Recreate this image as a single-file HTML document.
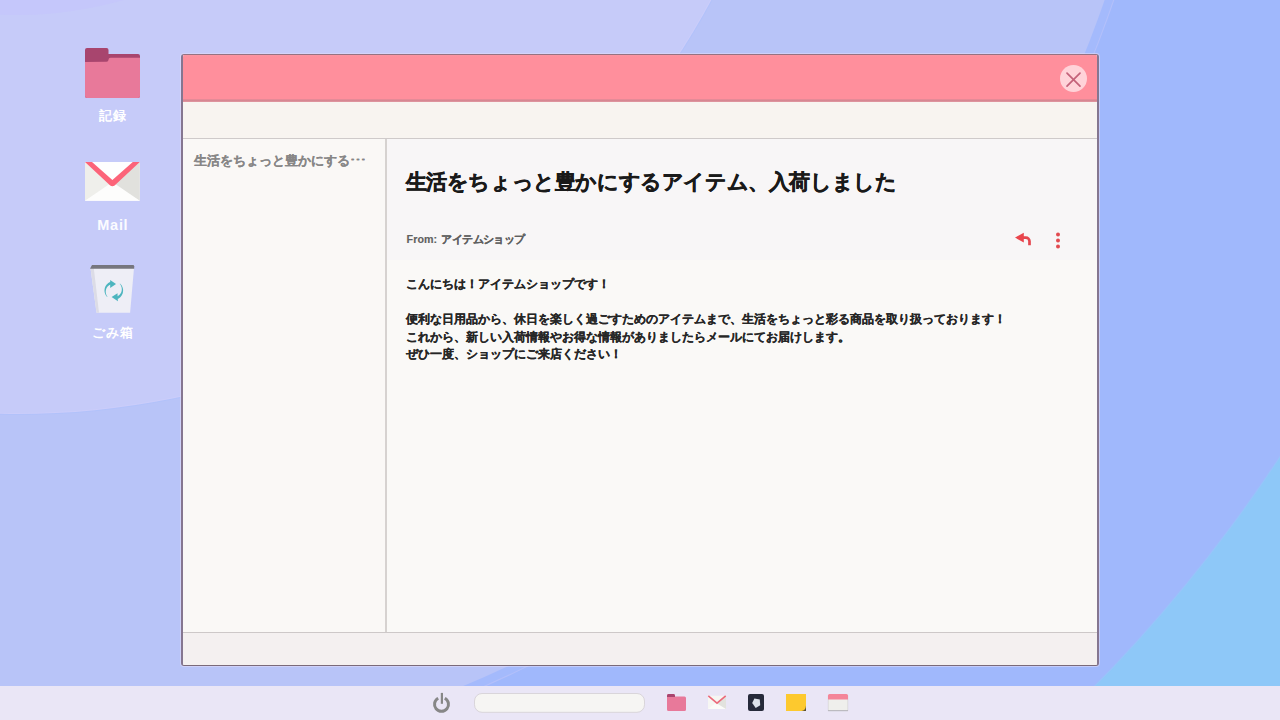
<!DOCTYPE html>
<html lang="ja">
<head>
<meta charset="utf-8">
<style>
*{margin:0;padding:0;box-sizing:border-box}
html,body{width:1280px;height:720px;overflow:hidden}
body{position:relative;font-family:"Liberation Sans",sans-serif;background:#8ec8f8}
.abs{position:absolute}
.bg{position:absolute;left:0;top:0;width:1280px;height:720px;overflow:hidden;background:#8ec8f8}
.c{position:absolute;border-radius:50%}
.label{position:absolute;color:#fff;font-weight:bold;font-size:14px;line-height:16px;text-align:center;width:100px;letter-spacing:0.5px;white-space:nowrap}
.win{position:absolute;left:181px;top:54px;width:918px;height:612px;border:2px solid #857690;border-top:1.5px solid #967282;border-bottom:1px solid #7a6a7a;border-radius:3px;box-shadow:0 0 0 1px rgba(225,220,250,0.55);background:#faf8f6;overflow:hidden}
.title{position:absolute;left:0;top:0;width:914px;height:47px;background:linear-gradient(to bottom,#fa96a2 0px,#ff8f9c 2px,#ff8f9c 43.5px,#d88894 45px,#d48590 46px,#e8a0aa 47px)}
.tool{position:absolute;left:0;top:47px;width:914px;height:37px;background:#f8f4f0;border-bottom:1px solid #cfcaca}
.left{position:absolute;left:0;top:84px;width:204px;height:494px;background:#faf8f6;border-right:2px solid #d6d2d0}
.right{position:absolute;left:204px;top:84px;width:710px;height:494px;background:#faf9f7}
.hdr{position:absolute;left:0;top:0;width:710px;height:121px;background:#f8f6f7}
.foot{position:absolute;left:0;top:577px;width:914px;height:34px;background:#f4f0f0;border-top:1px solid #cdc8c8}
.taskbar{position:absolute;left:0;top:686px;width:1280px;height:34px;background:#eae6f6}
.t{position:absolute;white-space:nowrap}
</style>
</head>
<body>
<div class="bg">
  <div class="c" style="left:-1493.9px;top:-1884.9px;width:3022.6px;height:3022.6px;background:#98c4fa"></div>
  <div class="c" style="left:-1493.4px;top:-1884.4px;width:3021.6px;height:3021.6px;background:#a0b8fc;"></div>
  <div class="c" style="left:-1140.8px;top:-1531.8px;width:2316.4px;height:2316.4px;background:#b4c0fa;"></div>
  <div class="c" style="left:-1139.8px;top:-1530.8px;width:2314.4px;height:2314.4px;background:#a4bafc;"></div>
  <div class="c" style="left:-1132.2px;top:-1523.2px;width:2299.2px;height:2299.2px;background:#b8c4f8;"></div>
  <div class="c" style="left:-772.2px;top:-1164.2px;width:1579.2px;height:1579.2px;background:#b2c2fa;"></div>
  <div class="c" style="left:-771.4px;top:-1163.4px;width:1577.6px;height:1577.6px;background:#cbcdfa;"></div>
  <div class="c" style="left:-770.4px;top:-1162.4px;width:1575.6px;height:1575.6px;background:#c6cbf9;"></div>
  <div class="c" style="left:-371.6px;top:-762.6px;width:778.0px;height:778.0px;background:#c5c7fb;"></div>
</div>

<!-- desktop icons -->
<svg class="abs" style="left:80px;top:44px" width="64" height="60" viewBox="80 44 64 60">
  <path d="M85 50 a2 2 0 0 1 2 -2 h19.5 a2 2 0 0 1 2 2 v4 h29.5 a2 2 0 0 1 2 2 v40 a2 2 0 0 1 -2 2 h-51 a2 2 0 0 1 -2 -2z" fill="#a8456e"/>
  <path d="M85 62 V96 a2 2 0 0 0 2 2 h51 a2 2 0 0 0 2 -2 V57.8 H110.5 a2 2 0 0 0 -2 2 a2 2 0 0 1 -2 2z" fill="#e8799a"/>
</svg>
<div class="label" style="left:62.5px;top:107.5px;font-size:13px;letter-spacing:1.5px;text-indent:1.5px">記録</div>

<svg class="abs" style="left:80px;top:156px" width="64" height="50" viewBox="80 156 64 50">
  <rect x="85" y="162" width="54.8" height="38.7" fill="#fefefe"/>
  <path d="M85 162 L112.4 185 L85 200.7z" fill="#efefeb"/>
  <path d="M139.8 162 L112.4 185 L139.8 200.7z" fill="#e1e1dd"/>
  <path d="M85 200.7 L112.4 182 L139.8 200.7z" fill="#fdfdfc"/>
  <path d="M85 162 H92 L112.4 180 L132.8 162 H139.8 L114.6 185.4 Q112.4 187 110.2 185.4z" fill="#fc6479"/>
</svg>
<div class="label" style="left:62.5px;top:217px;letter-spacing:0.7px;text-indent:0.7px;font-size:14.5px;color:#fbfbff">Mail</div>

<svg class="abs" style="left:84px;top:260px" width="56" height="58" viewBox="84 260 56 58">
  <path d="M90.5 268 L134 268 L130.1 312.8 L96.5 312.8z" fill="#eeeef6"/>
  <path d="M90.5 268 L93.8 268 L99 312.8 L96.5 312.8z" fill="#dcdce6"/>
  <path d="M90 268.8 L92 265 H133 a1.2 1.2 0 0 1 1.2 1.2 V268.8z" fill="#76767e"/>
  <path d="M107.22 297.08 L106.69 296.49 L106.21 295.87 L105.78 295.20 L105.41 294.50 L105.10 293.78 L104.85 293.02 L104.67 292.25 L104.55 291.47 L104.50 290.68 L104.52 289.89 L104.61 289.11 L104.76 288.33 L104.97 287.57 L105.26 286.83 L105.60 286.12 L106.00 285.43 L106.46 284.79 L106.97 284.19 L107.53 283.63 L108.14 283.12 L108.79 282.67 L109.47 282.27 L110.18 281.93 L110.93 281.66 L111.79 284.32 L111.23 284.42 L110.68 284.57 L110.13 284.77 L109.60 285.03 L109.08 285.33 L108.59 285.68 L108.12 286.08 L107.68 286.52 L107.27 287.01 L106.91 287.54 L106.59 288.10 L106.31 288.70 L106.09 289.33 L105.92 289.98 L105.80 290.66 L105.74 291.35 L105.75 292.05 L105.81 292.75 L105.94 293.46 L106.13 294.16 L106.38 294.85 L106.70 295.52 L107.07 296.17 L107.51 296.79z" fill="#4db5bf"/>
  <path d="M120.02 283.59 L120.58 284.14 L121.10 284.73 L121.56 285.37 L121.96 286.04 L122.31 286.74 L122.59 287.47 L122.82 288.22 L122.98 288.99 L123.07 289.77 L123.10 290.55 L123.06 291.34 L122.96 292.11 L122.79 292.88 L122.56 293.63 L122.26 294.36 L121.91 295.06 L121.49 295.72 L121.03 296.35 L120.51 296.94 L119.94 297.48 L119.33 297.98 L118.68 298.42 L118.00 298.80 L117.28 299.12 L116.23 296.53 L116.78 296.39 L117.32 296.20 L117.84 295.97 L118.36 295.68 L118.85 295.35 L119.32 294.97 L119.76 294.54 L120.16 294.08 L120.53 293.57 L120.86 293.02 L121.15 292.45 L121.38 291.84 L121.57 291.20 L121.70 290.55 L121.78 289.87 L121.79 289.19 L121.75 288.49 L121.65 287.80 L121.48 287.11 L121.26 286.42 L120.97 285.75 L120.62 285.10 L120.22 284.48 L119.76 283.89z" fill="#4db5bf"/>
  <path d="M110.2 280 L116 283.9 L110.2 287.9z" fill="#4db5bf"/>
  <path d="M111.6 297.1 L117.5 293.2 L117.9 301.2z" fill="#4db5bf"/>
</svg>
<div class="label" style="left:62.5px;top:324.5px;font-size:13px;letter-spacing:1px;text-indent:1px">ごみ箱</div>

<div class="win">
  <div class="title"></div>
  <div class="tool"></div>
  <div class="left">
    <div class="t" style="left:11px;top:14px;font-size:13px;line-height:16px;color:#878686;font-weight:bold;-webkit-text-stroke:0.1px #878686">生活をちょっと豊かにする<span style="display:inline-block;transform:scaleX(1.45);margin-left:2px;font-size:11px;-webkit-text-stroke:0.15px #878686;position:relative;top:-1px">⋯</span></div>
  </div>
  <div class="right">
    <div class="hdr"></div>
    <div class="t" style="left:18.5px;top:30px;font-size:21px;letter-spacing:-0.4px;line-height:26px;color:#1a1a1a;font-weight:bold;-webkit-text-stroke:0.45px #1a1a1a">生活をちょっと豊かにするアイテム、入荷しました</div>
    <div class="t" style="left:19.5px;top:93px;font-size:10.7px;line-height:14px;color:#606060;font-weight:bold;-webkit-text-stroke:0.15px #606060"><span style="letter-spacing:0.1px">From: </span><span style="letter-spacing:-0.6px;margin-left:1px">アイテムショップ</span></div>
    <div class="t" style="left:19px;top:137px;font-size:11.5px;line-height:17.5px;color:#262626;font-weight:bold;-webkit-text-stroke:0.2px #262626">こんにちは！アイテムショップです！<br><br>便利な日用品から、休日を楽しく過ごすためのアイテムまで、生活をちょっと彩る商品を取り扱っております！<br>これから、新しい入荷情報やお得な情報がありましたらメールにてお届けします。<br>ぜひ一度、ショップにご来店ください！</div>
  </div>
  <div class="foot"></div>
</div>

<!-- close button -->
<svg class="abs" style="left:1056px;top:61px" width="36" height="36" viewBox="1056 61 36 36">
  <circle cx="1073.5" cy="78.5" r="13.5" fill="#ffd3d9"/>
  <path d="M1067 73.2 L1080 86.2 M1080 73.2 L1067 86.2" stroke="#c4627a" stroke-width="1.7" stroke-linecap="round"/>
</svg>

<!-- reply & menu -->
<svg class="abs" style="left:1010px;top:226px" width="56" height="28" viewBox="1010 226 56 28">
  <path d="M1015 237.6 L1023.8 232.8 L1023.8 242.4z" fill="#ea454c"/>
  <path d="M1022.5 237.6 H1025.8 A3.7 3.7 0 0 1 1029.5 241.3 V245.2" fill="none" stroke="#e5464e" stroke-width="2.7"/>
  <circle cx="1058" cy="234.5" r="2" fill="#e24a50"/>
  <circle cx="1058" cy="240.5" r="2" fill="#e24a50"/>
  <circle cx="1058" cy="246.5" r="2" fill="#e24a50"/>
</svg>

<div class="taskbar"></div>
<svg class="abs" style="left:428px;top:690px" width="440" height="28" viewBox="428 690 440 28">
  <path d="M438.2 698.2 A7 7 0 1 0 444.8 698.2" fill="none" stroke="#878787" stroke-width="3"/>
  <path d="M441.9 692.9 V703.8" stroke="#878787" stroke-width="2.2"/>
  <rect x="474.5" y="693.5" width="170" height="18.8" rx="7.5" fill="#f6f5f3" stroke="#d9d5da" stroke-width="1"/>
  <!-- folder -->
  <path d="M667 695.5 a1.5 1.5 0 0 1 1.5 -1.5 h5 a1.5 1.5 0 0 1 1.5 1.5 v1 h9.5 a1.5 1.5 0 0 1 1.5 1.5 v11.5 a1.5 1.5 0 0 1 -1.5 1.5 h-16 a1.5 1.5 0 0 1 -1.5 -1.5z" fill="#e8799a"/>
  <path d="M667 695.5 a1.5 1.5 0 0 1 1.5 -1.5 h5 a1.5 1.5 0 0 1 1.5 1.5 v1.5 h-8z" fill="#a8456e"/>
  <!-- mail -->
  <rect x="708" y="695.7" width="18" height="13.3" fill="#f6f6f3"/>
  <path d="M708 709 L717 702 L726 709z" fill="#fbfbf9"/>
  <path d="M726 695.7 L717 703.5 L726 709z" fill="#e2e2de"/>
  <path d="M708.3 695.8 L717 703.2 L725.7 695.8" fill="none" stroke="#ec6a7c" stroke-width="1.6"/>
  <!-- dark -->
  <rect x="748" y="694" width="16" height="17" rx="2" fill="#262a3a"/>
  <path d="M752.2 703 L754.4 698.6 L759.8 699.4 L760.2 705.3 L755.7 707.9z" fill="#dde2ea"/>
  <!-- yellow note -->
  <path d="M786 694 H806 V711 H786z" fill="#fdc92e"/>
  <path d="M806 705.5 Q805.6 710.6 801.5 711 H806z" fill="#5e5232"/>
  <!-- calendar -->
  <path d="M828 695.5 a1.5 1.5 0 0 1 1.5 -1.5 h17 a1.5 1.5 0 0 1 1.5 1.5 V711 H828z" fill="#efefec"/>
  <path d="M828.25 695.5 V710.75 H847.75 V695.5" fill="none" stroke="#c9c7cc" stroke-width="0.5"/>
  <rect x="828" y="710.2" width="20" height="0.9" fill="#b4b2b8"/>
  <path d="M828 699.6 V695.5 a1.5 1.5 0 0 1 1.5 -1.5 h17 a1.5 1.5 0 0 1 1.5 1.5 V699.6z" fill="#f48599"/>
</svg>
</body>
</html>
